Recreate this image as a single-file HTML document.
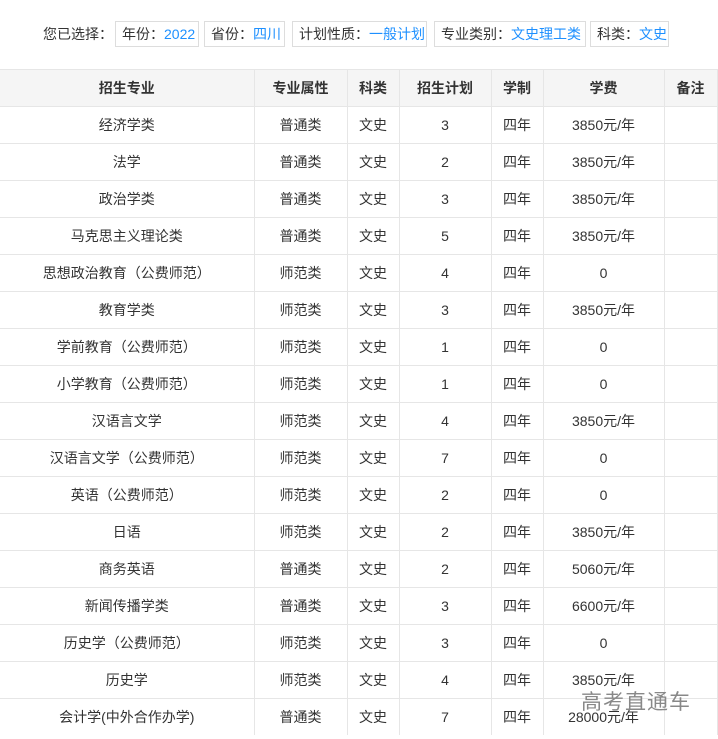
<!DOCTYPE html>
<html><head><meta charset="utf-8"><style>
body{margin:0;width:718px;height:739px;overflow:hidden;background:#fff;font-family:"Liberation Sans","Noto Sans CJK SC",sans-serif;font-size:14px;color:#333;position:relative}
.f{position:absolute;top:21px;height:24px;line-height:24px;border:1px solid #ddd;padding:0 0 0 6px;box-sizing:content-box;white-space:nowrap;color:#333}
.f b{font-weight:normal;color:#1e90ff}
.lbl{position:absolute;left:43px;top:21px;line-height:26px}
table{position:absolute;left:0;top:69px;border-collapse:collapse;width:717px;table-layout:fixed}
td,th{height:36px;border-top:1px solid #e6e6e6;border-right:1px solid #e6e6e6;text-align:center;padding:0;font-weight:normal;white-space:nowrap}
th{background:#f5f5f5;font-weight:bold;color:#333}
.wm{position:absolute;left:581px;top:686px;font-size:21px;color:#888;letter-spacing:1px}
</style></head><body>
<div class="lbl">您已选择：</div>
<div class="f" style="left:115px;width:76px">年份：<b>2022</b></div>
<div class="f" style="left:204px;width:73px">省份：<b>四川</b></div>
<div class="f" style="left:292px;width:127px">计划性质：<b>一般计划</b></div>
<div class="f" style="left:434px;width:144px">专业类别：<b>文史理工类</b></div>
<div class="f" style="left:590px;width:71px">科类：<b>文史</b></div>
<table>
<colgroup><col style="width:254px"><col style="width:93px"><col style="width:52px"><col style="width:92px"><col style="width:52px"><col style="width:121px"><col style="width:53px"></colgroup>
<tr><th>招生专业</th><th>专业属性</th><th>科类</th><th>招生计划</th><th>学制</th><th>学费</th><th>备注</th></tr>
<tr><td>经济学类</td><td>普通类</td><td>文史</td><td>3</td><td>四年</td><td>3850元/年</td><td></td></tr>
<tr><td>法学</td><td>普通类</td><td>文史</td><td>2</td><td>四年</td><td>3850元/年</td><td></td></tr>
<tr><td>政治学类</td><td>普通类</td><td>文史</td><td>3</td><td>四年</td><td>3850元/年</td><td></td></tr>
<tr><td>马克思主义理论类</td><td>普通类</td><td>文史</td><td>5</td><td>四年</td><td>3850元/年</td><td></td></tr>
<tr><td>思想政治教育（公费师范）</td><td>师范类</td><td>文史</td><td>4</td><td>四年</td><td>0</td><td></td></tr>
<tr><td>教育学类</td><td>师范类</td><td>文史</td><td>3</td><td>四年</td><td>3850元/年</td><td></td></tr>
<tr><td>学前教育（公费师范）</td><td>师范类</td><td>文史</td><td>1</td><td>四年</td><td>0</td><td></td></tr>
<tr><td>小学教育（公费师范）</td><td>师范类</td><td>文史</td><td>1</td><td>四年</td><td>0</td><td></td></tr>
<tr><td>汉语言文学</td><td>师范类</td><td>文史</td><td>4</td><td>四年</td><td>3850元/年</td><td></td></tr>
<tr><td>汉语言文学（公费师范）</td><td>师范类</td><td>文史</td><td>7</td><td>四年</td><td>0</td><td></td></tr>
<tr><td>英语（公费师范）</td><td>师范类</td><td>文史</td><td>2</td><td>四年</td><td>0</td><td></td></tr>
<tr><td>日语</td><td>师范类</td><td>文史</td><td>2</td><td>四年</td><td>3850元/年</td><td></td></tr>
<tr><td>商务英语</td><td>普通类</td><td>文史</td><td>2</td><td>四年</td><td>5060元/年</td><td></td></tr>
<tr><td>新闻传播学类</td><td>普通类</td><td>文史</td><td>3</td><td>四年</td><td>6600元/年</td><td></td></tr>
<tr><td>历史学（公费师范）</td><td>师范类</td><td>文史</td><td>3</td><td>四年</td><td>0</td><td></td></tr>
<tr><td>历史学</td><td>师范类</td><td>文史</td><td>4</td><td>四年</td><td>3850元/年</td><td></td></tr>
<tr><td>会计学(中外合作办学)</td><td>普通类</td><td>文史</td><td>7</td><td>四年</td><td>28000元/年</td><td></td></tr>
</table>
<div class="wm">高考直通车</div>
</body></html>
